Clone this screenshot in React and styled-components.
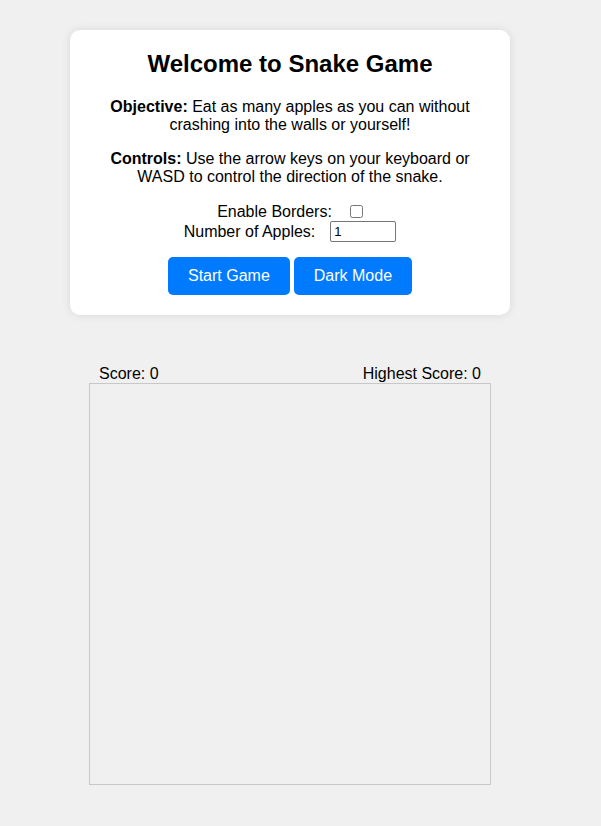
import React from "react";
import styled, { createGlobalStyle } from "styled-components";

const Global = createGlobalStyle`
  html, body { margin: 0; padding: 0; background: #f0f0f0; }
  body { font-family: "Liberation Sans", Arial, sans-serif; color: #000; }
`;

const Page = styled.div`
  width: 580px;
  display: flex;
  flex-direction: column;
  align-items: center;
  padding-top: 30px;
`;

const Card = styled.div`
  box-sizing: border-box;
  width: 440px;
  background: #fff;
  border-radius: 10px;
  box-shadow: 0 0 10px rgba(0, 0, 0, 0.1);
  padding: 20px;
  text-align: center;
`;

const Title = styled.h2`
  font-size: 24px;
  font-weight: bold;
  margin: 0 0 20px;
  line-height: 28px;
`;

const Para = styled.p`
  font-size: 16px;
  line-height: 18px;
  margin: 0 0 16px;
  padding: 0 20px;
`;

const Row = styled.div`
  font-size: 16px;
  line-height: 18px;
  height: ${(p) => p.$h}px;
  display: flex;
  align-items: center;
  justify-content: center;
`;

const Label = styled.label`
  margin-right: ${(p) => p.$gap}px;
`;

const Check = styled.input`
  width: 13px;
  height: 13px;
  margin: 0;
`;

const NumInput = styled.input`
  box-sizing: border-box;
  width: 66px;
  height: 21px;
  border: 1px solid #767676;
  border-radius: 2px;
  padding: 1px 3px;
  font-family: "Liberation Sans", Arial, sans-serif;
  font-size: 13px;
  color: #000;
  background: #fff;
`;

const Buttons = styled.div`
  display: flex;
  justify-content: center;
  gap: 4px;
  margin-top: 15px;
`;

const Button = styled.button`
  background: #007bff;
  color: #fff;
  border: none;
  border-radius: 5px;
  padding: 10px 20px;
  font-family: "Liberation Sans", Arial, sans-serif;
  font-size: 16px;
  line-height: 18px;
  cursor: pointer;
`;

const ScoreRow = styled.div`
  box-sizing: border-box;
  width: 402px;
  margin-top: 49px;
  padding: 0 10px;
  display: flex;
  justify-content: space-between;
  font-size: 16px;
  line-height: 20px;
  height: 19px;
`;

const Board = styled.div`
  width: 400px;
  height: 400px;
  border: 1px solid #c8c8c8;
  background: #f0f0f0;
`;

export default function App() {
  return (
    <>
      <Global />
      <Page>
        <Card>
          <Title>Welcome to Snake Game</Title>
          <Para>
            <b>Objective:</b> Eat as many apples as you can without crashing into the walls or yourself!
          </Para>
          <Para>
            <b>Controls:</b> Use the arrow keys on your keyboard or WASD to control the direction of the snake.
          </Para>
          <Row $h={19}>
            <Label $gap={18}>Enable Borders:</Label>
            <Check type="checkbox" />
          </Row>
          <Row $h={21}>
            <Label $gap={15}>Number of Apples:</Label>
            <NumInput type="number" defaultValue={1} />
          </Row>
          <Buttons>
            <Button>Start Game</Button>
            <Button>Dark Mode</Button>
          </Buttons>
        </Card>
        <ScoreRow>
          <span>Score: 0</span>
          <span>Highest Score: 0</span>
        </ScoreRow>
        <Board />
      </Page>
    </>
  );
}
